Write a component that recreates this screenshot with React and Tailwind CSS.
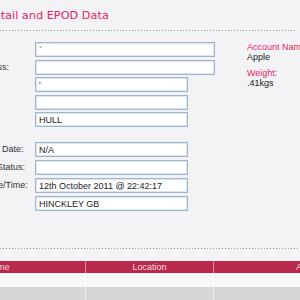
import { useState } from "react";

export default function App(){

    const [groupOne] = useState([
        { label: "", value: "`", wide: true },
        { label: "To Address:", value: "", wide: true },
        { label: "", value: "'", wide: false },
        { label: "", value: "", wide: false },
        { label: "", value: "HULL", wide: false },
    ]);

    const [groupTwo] = useState([
        { label: "Expected Date:", value: "N/A" },
        { label: "Delivery Status:", value: "" },
        { label: "POD Date/Time:", value: "12th October 2011 @ 22:42:17" },
        { label: "Location:", value: "HINCKLEY GB" },
    ]);

    function Row({label, value, wide, className}){
        return(
            <div className={"flex items-center h-[15px] " + className}>
                <label className="w-[73px] shrink-0 whitespace-nowrap leading-[15px] text-[#333]">{label}</label>
                <input readOnly value={value} className={(wide ? "w-[180px]" : "w-[153px]") + " h-[15px] bg-white border border-[#9fb4cf] shadow-[inset_0_0_0_1px_#dbe4ef] px-[3px] text-[9px] leading-[13px] text-[#222] outline-none"}/>
            </div>
        );
    }

    return(
        <div className="w-[300px] h-[300px] overflow-hidden bg-[#f3f3f6] font-['Liberation_Sans',Arial,sans-serif] text-[9px] text-[#333]">
            <h1 className="ml-[-15px] h-[30px] pt-[9px] font-['DejaVu_Sans',sans-serif] text-[11.3px] leading-[14px] text-[#e3245f] whitespace-nowrap">Detail and EPOD Data</h1>
            <div className="h-px mr-[3px] bg-[linear-gradient(to_right,#9a9a9a_1px,transparent_1px)] bg-[length:3px_1px]"></div>

            <div className="flex mt-[11px]">
                <div className="flex flex-col ml-[-38px] w-[253px] shrink-0">
                    {groupOne.map((r, i) => (
                        <Row key={i} label={r.label} value={r.value} wide={r.wide} className={i === 0 ? "" : (i % 2 === 1 ? "mt-[3px]" : "mt-[2px]")}/>
                    ))}
                    {groupTwo.map((r, i) => (
                        <Row key={i} label={r.label} value={r.value} wide={false} className={i === 0 ? "mt-[15px]" : "mt-[3px]"}/>
                    ))}
                </div>
                <div className="ml-[32px] flex flex-col whitespace-nowrap leading-[10px]">
                    <span className="text-[#e3245f]">Account Name</span>
                    <span className="text-[#222]">Apple</span>
                    <span className="text-[#e3245f] mt-[6px]">Weight:</span>
                    <span className="text-[#222]">.41kgs</span>
                </div>
            </div>

            <div className="h-px mt-[37px] mr-[2px] bg-[linear-gradient(to_right,#9a9a9a_1px,transparent_1px)] bg-[length:3px_1px]"></div>

            <div className="mt-[12px] flex flex-col">
                <div className="flex h-[12px] bg-[#b8294c] text-[#f5dbe2] leading-[12px] whitespace-nowrap">
                    <div className="ml-[-90px] w-[176px] shrink-0 text-center border-r border-[#d98a9c]">Name</div>
                    <div className="w-[128px] shrink-0 text-center border-r border-[#d98a9c]">Location</div>
                    <div className="pl-[82px] shrink-0">Action</div>
                </div>
                <div className="flex h-[14px] bg-[#f7f7f7]">
                    <div className="ml-[-90px] w-[176px] shrink-0 border-r border-white"></div>
                    <div className="w-[128px] shrink-0 border-r border-white"></div>
                </div>
                <div className="flex h-[13px] bg-[#d6d6d6]">
                    <div className="ml-[-90px] w-[176px] shrink-0 border-r border-[#ececec]"></div>
                    <div className="w-[128px] shrink-0 border-r border-[#ececec]"></div>
                </div>
            </div>
        </div>
    );
}
